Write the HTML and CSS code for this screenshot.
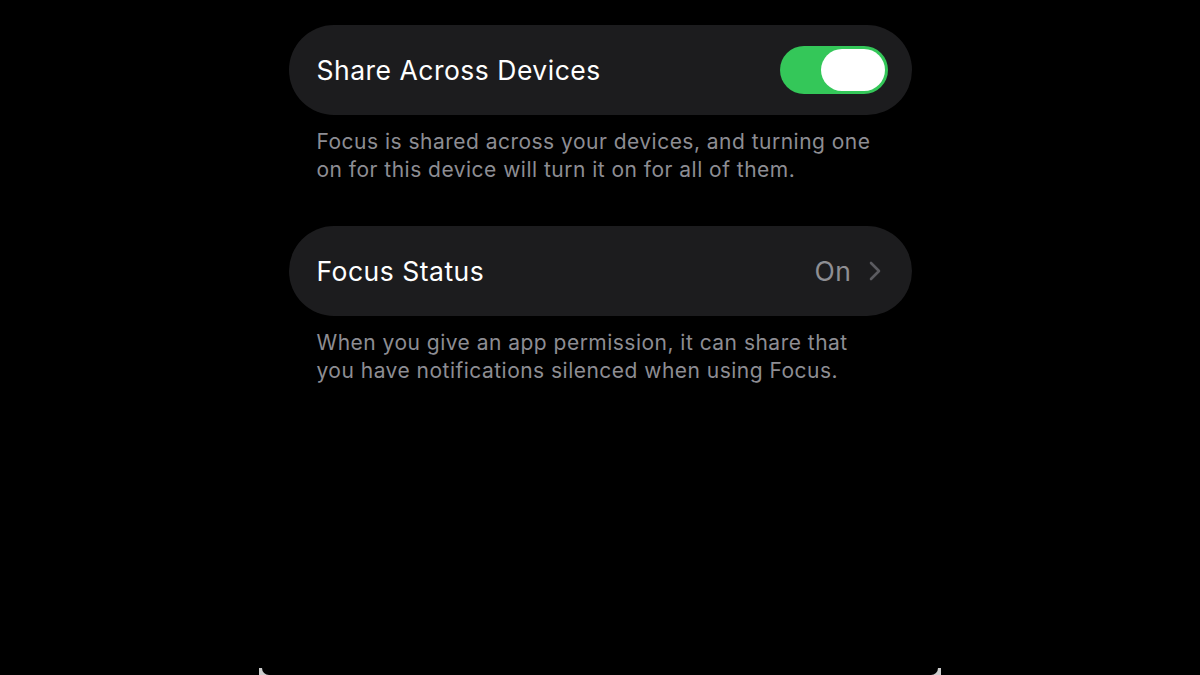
FILE: index.html
```html
<!DOCTYPE html>
<html>
<head>
<meta charset="utf-8">
<link rel="stylesheet" href="styles.css">
</head>
<body>
<main class="page">
  <section class="group">
    <div class="cell">
      <span class="label">Share Across Devices</span>
      <span class="toggle"><span class="knob"></span></span>
    </div>
    <p class="footer">Focus is shared across your devices, and turning one on for this device will turn it on for all of them.</p>
  </section>
  <section class="group">
    <div class="cell">
      <span class="label">Focus Status</span>
      <span class="detail">On
        <svg class="chev" width="14" height="22" viewBox="0 0 14 22"><path d="M3 3 L11 11 L3 19" fill="none" stroke="#5b5b60" stroke-width="2.6" stroke-linecap="round" stroke-linejoin="round"/></svg>
      </span>
    </div>
    <p class="footer">When you give an app permission, it can share that you have notifications silenced when using Focus.</p>
  </section>
</main>
<div class="frame"></div>
</body>
</html>
```
FILE: styles.css
```css
html, body {
  margin: 0;
  padding: 0;
  background: #000;
  width: 1200px;
  height: 675px;
  overflow: hidden;
  font-family: Inter, "Noto Sans", sans-serif;
}
.page {
  width: 623px;
  margin: 0 auto;
  padding-top: 25px;
  display: flex;
  flex-direction: column;
  gap: 42px;
}
.group {
  display: flex;
  flex-direction: column;
}
.cell {
  height: 90px;
  background: #1c1c1e;
  border-radius: 45px;
  display: flex;
  align-items: center;
  justify-content: space-between;
  padding: 0 24px 0 28px;
}
.label {
  color: #fff;
  font-size: 26.5px;
  letter-spacing: 0.5px;
}
.toggle {
  width: 108px;
  height: 48px;
  border-radius: 24px;
  background: #34c759;
  display: flex;
  align-items: center;
  justify-content: flex-end;
  padding-right: 3px;
  box-sizing: border-box;
}
.knob {
  width: 64px;
  height: 42px;
  border-radius: 21px;
  background: #fff;
}
.detail {
  color: #8e8e93;
  font-size: 26.5px;
  letter-spacing: 0.5px;
  display: flex;
  align-items: center;
  gap: 16px;
  padding-right: 6px;
}
.chev {
  display: block;
}
.footer {
  margin: 13px 0 0;
  padding: 0 28px;
  color: #8d8d93;
  font-size: 21px;
  line-height: 28px;
  letter-spacing: 0.48px;
}
.frame {
  position: absolute;
  left: 259px;
  top: 668px;
  width: 682px;
  height: 7px;
  background: #ccc;
}
.frame::after {
  content: "";
  position: absolute;
  left: 3px;
  right: 3px;
  top: 0;
  bottom: 0;
  background: #000;
  border-radius: 0 0 8px 8px;
}
```
